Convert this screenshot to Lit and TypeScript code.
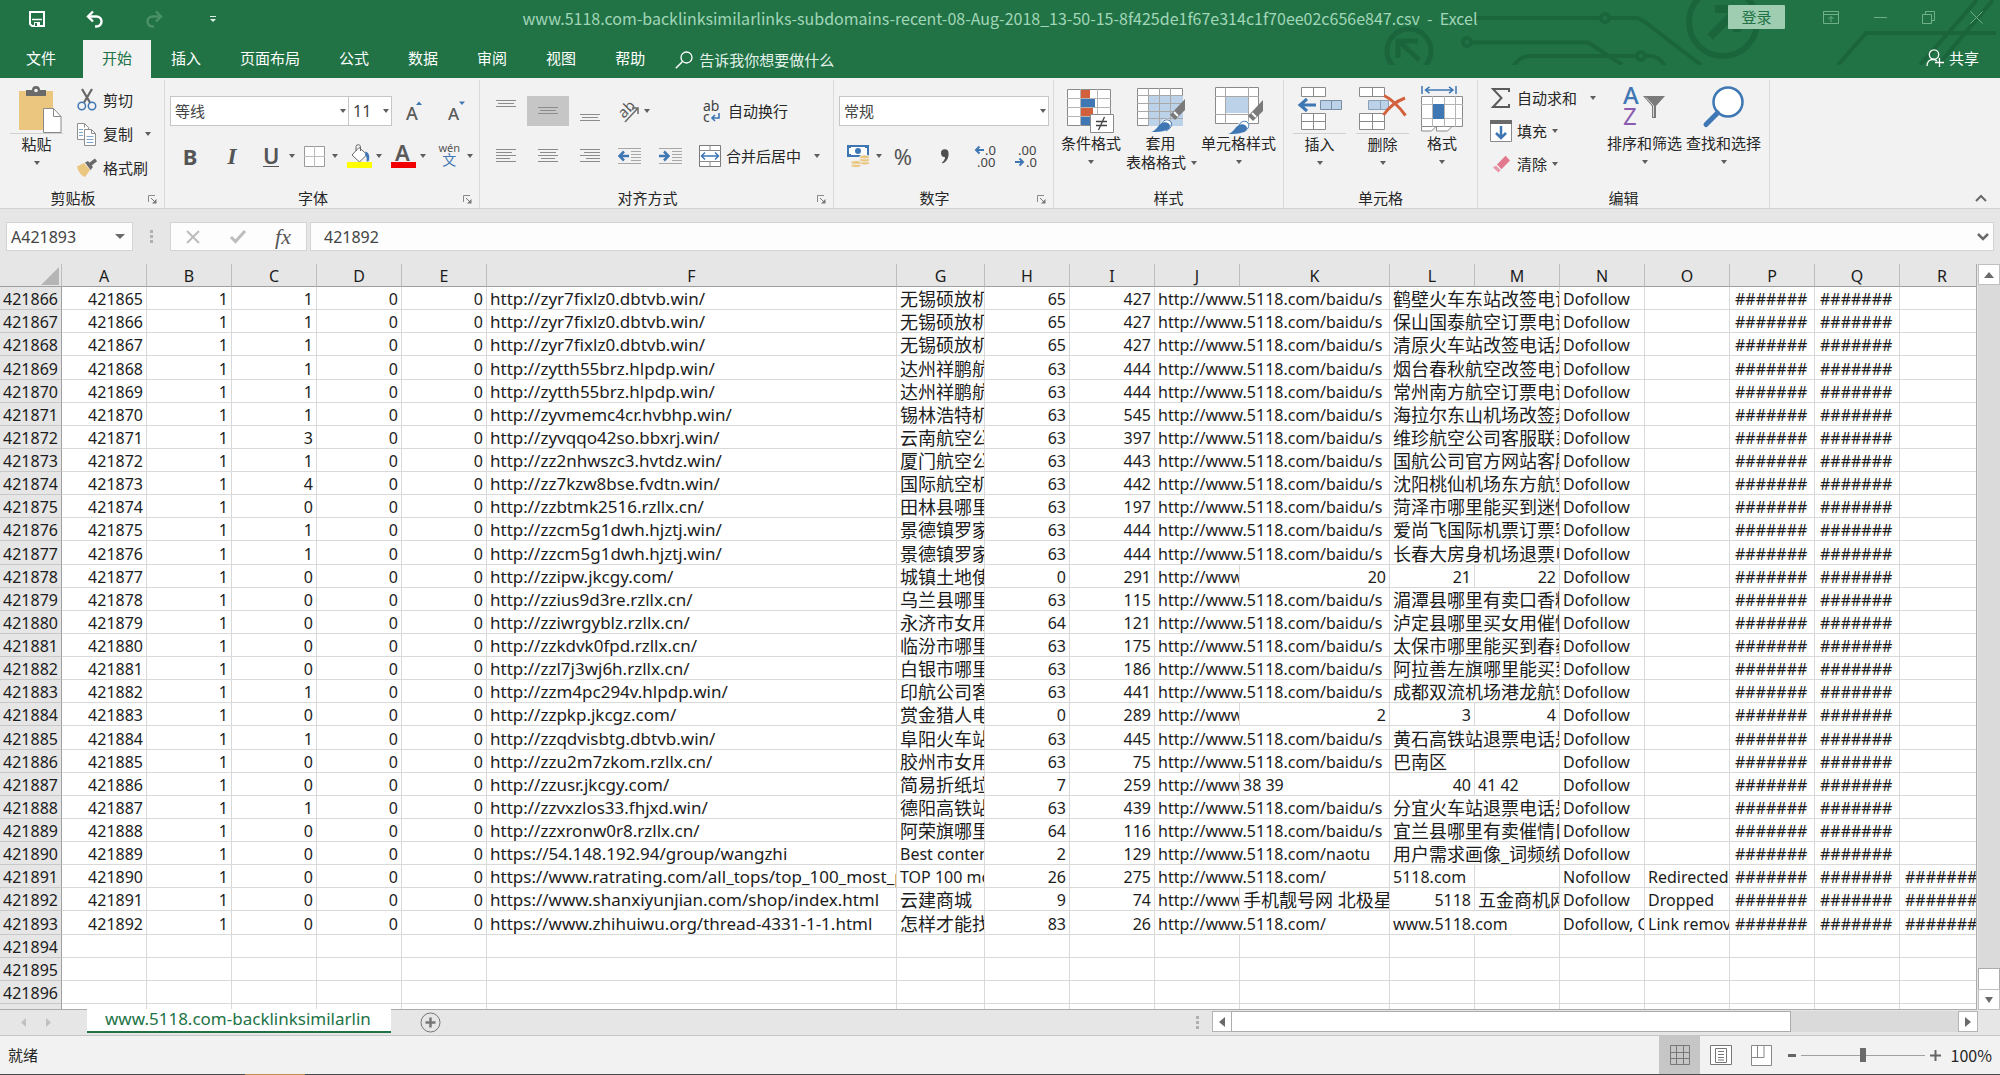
import { LitElement, html, css, svg, nothing, type TemplateResult } from "lit";
import { customElement } from "lit/decorators.js";
import { classMap } from "lit/directives/class-map.js";

type Cell = { text: string; kind?: "num" | "hash" | "cjk" | "url"; span?: number };

/* ---------- sheet data ---------- */

const COLUMNS = "ABCDEFGHIJKLMNOPQR".split("");
const FIRST_ROW = 421866;
const BAIDU = "http://www.5118.com/baidu/s";

/* [C, url, G, H, I, L] for ordinary rows */
type Row = [number, string, string, number, number, string | Cell[]];

const num = (text: string): Cell => ({ text, kind: "num" });
const cjk = (text: string, span = 1): Cell => ({ text, kind: "cjk", span });
const txt = (text: string, span = 1): Cell => ({ text, span });

const ROWS: Row[] = [
  [1, "http://zyr7fixlz0.dbtvb.win/", "无锡硕放机", 65, 427, "鹤壁火车东站改签电话"],
  [1, "http://zyr7fixlz0.dbtvb.win/", "无锡硕放机", 65, 427, "保山国泰航空订票电话"],
  [1, "http://zyr7fixlz0.dbtvb.win/", "无锡硕放机", 65, 427, "清原火车站改签电话是"],
  [1, "http://zytth55brz.hlpdp.win/", "达州祥鹏航", 63, 444, "烟台春秋航空改签电话"],
  [1, "http://zytth55brz.hlpdp.win/", "达州祥鹏航", 63, 444, "常州南方航空订票电话"],
  [1, "http://zyvmemc4cr.hvbhp.win/", "锡林浩特机", 63, 545, "海拉尔东山机场改签热"],
  [3, "http://zyvqqo42so.bbxrj.win/", "云南航空公", 63, 397, "维珍航空公司客服联系"],
  [1, "http://zz2nhwszc3.hvtdz.win/", "厦门航空公", 63, 443, "国航公司官方网站客服"],
  [4, "http://zz7kzw8bse.fvdtn.win/", "国际航空机", 63, 442, "沈阳桃仙机场东方航空"],
  [0, "http://zzbtmk2516.rzllx.cn/", "田林县哪里", 63, 197, "菏泽市哪里能买到迷情"],
  [1, "http://zzcm5g1dwh.hjztj.win/", "景德镇罗家", 63, 444, "爱尚飞国际机票订票客"],
  [1, "http://zzcm5g1dwh.hjztj.win/", "景德镇罗家", 63, 444, "长春大房身机场退票电"],
  [0, "http://zzipw.jkcgy.com/", "城镇土地使", 0, 291, [txt("http://www.5118.com/"), num("20"), num("21"), num("22")]],
  [0, "http://zzius9d3re.rzllx.cn/", "乌兰县哪里", 63, 115, "湄潭县哪里有卖口香糖"],
  [0, "http://zziwrgyblz.rzllx.cn/", "永济市女用", 64, 121, "泸定县哪里买女用催情"],
  [0, "http://zzkdvk0fpd.rzllx.cn/", "临汾市哪里", 63, 175, "太保市哪里能买到春药"],
  [0, "http://zzl7j3wj6h.rzllx.cn/", "白银市哪里", 63, 186, "阿拉善左旗哪里能买到"],
  [1, "http://zzm4pc294v.hlpdp.win/", "印航公司客", 63, 441, "成都双流机场港龙航空"],
  [0, "http://zzpkp.jkcgz.com/", "赏金猎人电", 0, 289, [txt("http://www.5118.com/"), num("2"), num("3"), num("4")]],
  [1, "http://zzqdvisbtg.dbtvb.win/", "阜阳火车站", 63, 445, "黄石高铁站退票电话是"],
  [0, "http://zzu2m7zkom.rzllx.cn/", "胶州市女用", 63, 75, [txt(BAIDU, 2), cjk("巴南区"), txt("")]],
  [0, "http://zzusr.jkcgy.com/", "简易折纸垃", 7, 259, [txt("http://www.5118.com/"), txt("38 39"), num("40"), txt("41 42")]],
  [1, "http://zzvxzlos33.fhjxd.win/", "德阳高铁站", 63, 439, "分宜火车站退票电话是"],
  [0, "http://zzxronw0r8.rzllx.cn/", "阿荣旗哪里", 64, 116, "宜兰县哪里有卖催情口"],
  [0, "https://54.148.192.94/group/wangzhi", "Best content", 2, 129, [txt("http://www.5118.com/naotu", 2), cjk("用户需求画像_词频统", 2)]],
  [0, "https://www.ratrating.com/all_tops/top_100_most_popular", "TOP 100 most", 26, 275, [txt("http://www.5118.com/", 2), txt("5118.com"), txt("")]],
  [0, "https://www.shanxiyunjian.com/shop/index.html", "云建商城", 9, 74, [txt("http://www.5118.com/"), cjk("手机靓号网 北极星"), num("5118"), cjk("五金商机网")]],
  [0, "https://www.zhihuiwu.org/thread-4331-1-1.html", "怎样才能找", 83, 26, [txt("http://www.5118.com/", 2), txt("www.5118.com", 2)]],
];

const TAILS: Record<number, [string, string]> = {
  25: ["Nofollow", "Redirected"],
  26: ["Dofollow", "Dropped"],
  27: ["Dofollow, Comment", "Link removed"],
};

function cellsOf(row: Row, index: number): Cell[] {
  const [c, url, g, h, i, rest] = row;
  const middle = typeof rest === "string" ? [txt(BAIDU, 2), cjk(rest, 2)] : rest;
  const [n, o] = TAILS[index] ?? ["Dofollow", ""];
  const hash: Cell = { text: "#######", kind: "hash" };
  return [
    num(String(FIRST_ROW + index - 1)), num("1"), num(String(c)), num("0"), num("0"),
    { text: url, kind: "url" },
    /^[A-Z]/.test(g) ? txt(g) : cjk(g),
    num(String(h)), num(String(i)),
    ...middle,
    txt(n), txt(o), hash, hash,
    TAILS[index] ? hash : txt(""),
  ];
}

/* ---------- icons ---------- */

const icon = (w: number, h: number, body: unknown) =>
  html`<svg width=${w} height=${h} viewBox="0 0 ${w} ${h}" fill="none" aria-hidden="true">${body}</svg>`;

const caret = html`<svg class="caret" width="6" height="4" viewBox="0 0 6 4" aria-hidden="true"><path d="M0 0h6L3 4z" fill="#5e5e5e"/></svg>`;

const UI = "'Noto Sans','Noto Sans CJK SC',sans-serif";
const GREY = "#6a6a6a";
const BLUE = "#3f77b4";

const I = {
  save: icon(16, 16, svg`<path d="M1 1h14v14H3l-2-2z" stroke="#fff" stroke-width="2"/><path d="M3 8.500h10" stroke="#fff" stroke-width="1.500"/><path d="M5 11h6v4H5z" fill="#fff"/><path d="M6 12h2v3H6z" fill="#217346"/>`),
  undo: icon(18, 17, svg`<path d="M3 5.500h7.500a5 5 0 0 1 0 10H9" stroke="#fff" stroke-width="2.400"/><path d="M7 .500L2 5.500l5 5" stroke="#fff" stroke-width="2.400"/>`),
  redo: icon(18, 17, svg`<path d="M15 5.500H7.500a5 5 0 0 0 0 10H9" stroke="#4a9069" stroke-width="2.400"/><path d="M11 .500l5 5-5 5" stroke="#4a9069" stroke-width="2.400"/>`),
  qat: icon(6, 7, svg`<path d="M0 .500h6" stroke="#dff0e6"/><path d="M0 3h6L3 6z" fill="#dff0e6"/>`),
  ribbonOpt: icon(16, 13, svg`<path d="M.500.500h15v12H.500zM.500 3.500h15M8 11V6M5.500 8L8 5.500 10.500 8" stroke="#6fb08a"/>`),
  min: icon(13, 13, svg`<path d="M0 6.500h13" stroke="#6fb08a"/>`),
  restore: icon(13, 13, svg`<path d="M.500 3.500h9v9h-9zM3.500 3.500v-3h9v9h-3" stroke="#6fb08a"/>`),
  close: icon(13, 13, svg`<path d="M.500.500l12 12M12.500.500l-12 12" stroke="#6fb08a"/>`),
  tell: icon(18, 18, svg`<circle cx="11.500" cy="6.500" r="5.500" stroke="#fff" stroke-width="1.300"/><path d="M7.500 10.500L.800 17.200" stroke="#fff" stroke-width="1.500"/>`),
  share: icon(18, 19, svg`<circle cx="8" cy="5.500" r="4.700" stroke="#fff" stroke-width="1.300"/><path d="M1 17c0-4 2.500-6.500 6-6.500 2 0 3 .500 4 1.500M13.500 9v9M9 13.500h9" stroke="#fff" stroke-width="1.300"/>`),
  launcher: icon(9, 9, svg`<path d="M.500 7V.500H7" stroke="#8a8a8a"/><path d="M3 3l4 4" stroke="#777"/><path d="M8.500 4v4.500H4z" fill="#777"/>`),
  paste: icon(44, 47, svg`<path d="M0 5h34v39H0z" fill="#ebc67f"/><path d="M7 10V4h6a4 4 0 0 1 8 0h6v6z" fill="${GREY}"/><circle cx="17" cy="4.500" r="1.800" fill="#f2f2f2"/><path d="M24.500 22.500h10l7.500 8v16H24.500z" fill="#fff" stroke="#8a8a8a"/><path d="M34.500 22.500v8H42" stroke="#8a8a8a"/>`),
  cut: icon(20, 22, svg`<path d="M5 0l8 13.500M15 0L7 13.500" stroke="#666" stroke-width="2.200"/><circle cx="4.800" cy="17" r="3.700" stroke="${BLUE}" stroke-width="1.500"/><circle cx="15" cy="17" r="3.700" stroke="${BLUE}" stroke-width="1.500"/>`),
  copy: icon(20, 23, svg`<path d="M.500.500h7l4 4v12h-11z" fill="#fff" stroke="#8e8e8e"/><path d="M7.500 6.500h7l4 4v12h-11z" fill="#fff" stroke="#8e8e8e"/><path d="M14.500 6.500v4h4M7.500.500v4" stroke="#8e8e8e"/><path d="M2 6.500h4M2 9.500h4M2 12.500h4M9.500 13.500h7M9.500 16.500h7M9.500 19.500h7" stroke="#7fa6cd"/>`),
  brush: icon(21, 18, svg`<path d="M0 7.500L7 4l6 7-5 7c-3-1-7-5-8-10.500z" fill="#ebc67f"/><path d="M8 3.500l3-1.500 5 6-2.500 3z" fill="${GREY}"/><path d="M13 5.500L19 .800" stroke="${GREY}" stroke-width="3.500"/>`),
  growA: icon(18, 20, svg`<text x="0" y="19" font-family=${UI} font-size="18" font-weight="500" fill="#5a5a5a">A</text><path d="M10 4l3-3.500L16 4z" fill="${BLUE}"/>`),
  shrinkA: icon(18, 20, svg`<text x="0" y="19" font-family=${UI} font-size="17" font-weight="500" fill="#5a5a5a">A</text><path d="M11 .500h6l-3 3.500z" fill="${BLUE}"/>`),
  borders: icon(21, 21, svg`<path d="M.500.500h20v20H.500z" fill="#fff" stroke="#9a9a9a"/><path d="M10.500 0v21M0 10.500h21" stroke="#bcbcbc"/>`),
  fill: icon(25, 24, svg`<path d="M5 11l7-7.500 8 7-7.500 7.500z" fill="#fff" stroke="#6a6a6a"/><path d="M9 7V2.500a2.300 2.300 0 0 1 4.500 0V7" stroke="#6a6a6a"/><path d="M18.500 7.500c3 1 4.500 4 3.500 8.500-.500 2-2.500 2-2.500 0 .500-2 0-4-1.500-5z" fill="${BLUE}"/><path d="M0 18h25v6H0z" fill="#ffff00"/>`),
  fontColor: icon(25, 24, svg`<text x="4" y="17" font-family=${UI} font-size="22" font-weight="600" fill="#5a5a5a">A</text><path d="M0 18h25v6H0z" fill="#f00000"/>`),
  orient: icon(24, 23, svg`<text x="3" y="18" transform="rotate(-45 6 14)" font-family=${UI} font-size="15" fill="#5a5a5a">ab</text><path d="M8 22L21 8M15 8h6v6" stroke="#6a6a6a" stroke-width="1.500"/>`),
  wrap: icon(17, 23, svg`<text x="0" y="11" font-family=${UI} font-size="14" fill="#444">ab</text><text x="0" y="22" font-family=${UI} font-size="14" fill="#444">c</text><path d="M16 13v5H9M12 15l-3 3 3 3" stroke="${BLUE}" stroke-width="1.600"/>`),
  outdent: icon(23, 18, svg`<path d="M0 1.500h23M0 16.500h23M13 4.500h10M13 7.500h10M13 10.500h10M13 13.500h10" stroke="#a8a8a8"/><path d="M11 9H2M6 4.500L1.500 9 6 13.500" stroke="${BLUE}" stroke-width="2.500"/>`),
  indent: icon(23, 18, svg`<path d="M0 1.500h23M0 16.500h23M13 4.500h10M13 7.500h10M13 10.500h10M13 13.500h10" stroke="#a8a8a8"/><path d="M0 9h9M5 4.500L9.500 9 5 13.500" stroke="${BLUE}" stroke-width="2.500"/>`),
  merge: icon(22, 22, svg`<path d="M.500.500h21v21H.500z" fill="#fff" stroke="#7a7a7a"/><path d="M0 5.500h22M0 16.500h22M11 0v5M11 17v5" stroke="#8a8a8a"/><path d="M3 11h16M6 7.500L2.500 11 6 14.500M16 7.500l3.500 3.500-3.500 3.500" stroke="${BLUE}" stroke-width="1.500"/>`),
  money: icon(23, 23, svg`<path d="M1 1h20v10H1z" fill="#fff" stroke="${BLUE}" stroke-width="2"/><circle cx="11" cy="6" r="3" fill="${BLUE}"/><path d="M1 1h3v2H1zM18 1h3v2h-3zM1 9h3v2H1z" fill="${BLUE}"/><g fill="#ebc67f" stroke="#f2f2f2"><ellipse cx="17.500" cy="18" rx="5" ry="2"/><ellipse cx="17.500" cy="15" rx="5" ry="2"/><ellipse cx="17.500" cy="12" rx="5" ry="2"/><ellipse cx="9" cy="20.500" rx="5" ry="2"/><ellipse cx="9" cy="17.500" rx="5" ry="2"/></g>`),
  comma: icon(9, 15, svg`<path d="M1 4a3.700 3.700 0 0 1 7.500 0c.500 5-2 9-6 10.500L2 13.500c2-1.500 3-3.500 3-5.500-2.500.300-4-1.500-4-4z" fill="#4f4f4f"/>`),
  incDec: icon(23, 23, svg`<path d="M10 5H2M5.500 1.500L2 5l3.500 3.500" stroke="${BLUE}" stroke-width="2"/><text x="11" y="10" font-family=${UI} font-size="13" fill="#444">.0</text><text x="3" y="22" font-family=${UI} font-size="13" fill="#444">.00</text>`),
  decDec: icon(23, 23, svg`<text x="3" y="10" font-family=${UI} font-size="13" fill="#444">.00</text><text x="11" y="22" font-family=${UI} font-size="13" fill="#444">.0</text><path d="M0 17h8M4.500 13.500L8 17l-3.500 3.500" stroke="${BLUE}" stroke-width="2"/>`),
  cond: icon(48, 48, svg`<path d="M.500 3.500h43v36H.500z" fill="#fff" stroke="#8a8a8a"/><path d="M13.500 3v37M30.500 3v37M0 12.500h44M0 21.500h44M0 30.500h44" stroke="#b4b4b4"/><path d="M14 4h9v8h-9zM14 22h12v8H14z" fill="#d2603c"/><path d="M14 13h14v8H14zM14 31h9v8h-9z" fill="${BLUE}"/><path d="M23.500 28.500h23v18h-23z" fill="#fff" stroke="#8a8a8a"/><path d="M29 35.500h11M29 39.500h11M37.500 31l-6 13" stroke="#444" stroke-width="1.300"/>`),
  tableFmt: icon(48, 46, svg`<path d="M.500 2.500h45v37H.500z" fill="#fff" stroke="#8a8a8a"/><path d="M12 10h34v30H12z" fill="#bcd2e8"/><path d="M11.500 2v38M22.500 2v38M33.500 2v38M0 9.500h46M0 17.500h46M0 25.500h46M0 32.500h46" stroke="#a8a8a8"/><path d="M48 13v11L38 34l-5-5z" fill="#7a7a7a"/><path d="M37 26l4 4" stroke="#fff" stroke-width="2"/><path d="M24 36c3-4 7-4 9-2 2 3 1 7-4 9z" fill="#fff"/><path d="M14 46c5-1 7-7 11-9 3-2 8 0 8 3 0 4-6 6-19 6z" fill="${BLUE}"/><path d="M25 37c2-4 7-4 9-1s-1 7-5 9" stroke="${BLUE}"/>`),
  cellStyle: icon(48, 48, svg`<path d="M.500 1.500h43v36H.500z" fill="#fff" stroke="#8a8a8a"/><path d="M10.500 1v37M33.500 1v37M0 10.500h44M0 28.500h44" stroke="#a8a8a8"/><path d="M11 11h22v16H11z" fill="#bcd2e8"/><path d="M48 14v11L38 35l-5-5z" fill="#7a7a7a"/><path d="M37 27l4 4" stroke="#fff" stroke-width="2"/><path d="M23 37c3-4 8-4 10-2 2 3 1 7-4 9z" fill="#fff"/><path d="M13 48c5-1 7-7 11-9 3-2 8 0 8 3 0 4-6 6-19 6z" fill="${BLUE}"/><path d="M24 39c2-4 7-5 9-2s0 7-5 9" stroke="${BLUE}"/>`),
  insert: icon(46, 46, svg`<path d="M4.500 1.500h24v9h-24zM16.500 1.500v9M4.500 27.500h24v16h-24zM4.500 35.500h24M16.500 27.500v16" fill="#fff" stroke="#8a8a8a"/><path d="M23.500 14.500h21v9h-21z" fill="#bcd2e8" stroke="#7a8ea3"/><path d="M34.500 14v10" stroke="#7a8ea3"/><path d="M19 19H4M10 13l-7 6 7 6" stroke="${BLUE}" stroke-width="3"/>`),
  del: icon(48, 46, svg`<path d="M.500 1.500h25v9h-25zM13.500 1.500v9M.500 27.500h25v16h-25zM.500 35.500h25M13.500 27.500v16" fill="#fff" stroke="#8a8a8a"/><path d="M9.500 14.500h20v9h-20z" fill="#bcd2e8" stroke="#8aa0b5"/><path d="M21.500 14v10" stroke="#8aa0b5"/><path d="M25 9.500c8 4 15 11 21.500 20M46 12c-8 3-16 9-21.500 17" stroke="#d2603c" stroke-width="3"/>`),
  format: icon(43, 46, svg`<path d="M.500 10.500h41v30H.500z" fill="#fff" stroke="#8a8a8a"/><path d="M11.500 10v31M23.500 10v31M34.500 10v31M0 18.500h42M0 32.500h42" stroke="#b4b4b4"/><path d="M12 18h11v15H12z" fill="${BLUE}"/><path d="M.500 41v4h10l4-4M15.500 41v4h11l4-4" fill="#fff" stroke="#8a8a8a"/><path d="M1 0v8M35 0v8M5 4h27M8.500.800L4.500 4l4 3.200M28 .800L32 4l-4 3.200" stroke="${BLUE}" stroke-width="1.500"/>`),
  sum: icon(20, 20, svg`<path d="M18 4V1H2l8.500 9L2 19h16v-3" stroke="#5a5a5a" stroke-width="2"/>`),
  fillDown: icon(22, 22, svg`<path d="M.500.500h21v21H.500z" fill="#fff" stroke="#8a8a8a"/><path d="M0 0h22v4H0z" fill="${GREY}"/><path d="M11 6v12M6 13l5 5 5-5" stroke="${BLUE}" stroke-width="2.500"/>`),
  eraser: icon(20, 18, svg`<path d="M6 9.500L14.500.800 19 5.500l-8.500 8.700z" fill="#e2788d"/><path d="M5 10.500l4.600 4.700-2.100 2.200L2 12.500z" fill="#e99aaa"/>`),
  sort: icon(43, 42, svg`<text x="0" y="18" font-family=${UI} font-size="24" font-weight="500" fill="${BLUE}">A</text><text x="0" y="39" font-family=${UI} font-size="24" fill="#8a5bb0">Z</text><path d="M20 10h22l-9 10v12h-4V20z" fill="#7a7a7a"/><path d="M23 11.500l7.500 8V31" stroke="#d8d8d8"/>`),
  find: icon(43, 43, svg`<circle cx="26" cy="16" r="14.500" fill="#fff" stroke="${BLUE}" stroke-width="2.500"/><path d="M15.500 27L4 38.500" stroke="${BLUE}" stroke-width="5" stroke-linecap="round"/>`),
  collapse: icon(12, 8, svg`<path d="M1 7l5-5 5 5" stroke="#6a6a6a" stroke-width="2"/>`),
  expand: icon(12, 8, svg`<path d="M1 1l5 5 5-5" stroke="#6a6a6a" stroke-width="2.500"/>`),
  nameCaret: icon(10, 5, svg`<path d="M0 0h10L5 5z" fill="#6a6a6a"/>`),
  dots: icon(3, 13, svg`<path d="M0 0h3v3H0zM0 5h3v3H0zM0 10h3v3H0z" fill="#b0b0b0"/>`),
  cancel: icon(14, 14, svg`<path d="M1 1l12 12M13 1L1 13" stroke="#bdbdbd" stroke-width="2"/>`),
  enter: icon(16, 13, svg`<path d="M1 7l4.500 4.500L15 1" stroke="#bdbdbd" stroke-width="3"/>`),
  corner: icon(18, 18, svg`<path d="M18 0v18H0z" fill="#b5b5b5"/>`),
  left: icon(6, 10, svg`<path d="M6 0v10L0 5z" fill="#6a6a6a"/>`),
  right: icon(6, 10, svg`<path d="M0 0v10l6-5z" fill="#6a6a6a"/>`),
  navLeft: icon(5, 9, svg`<path d="M5 0v9L0 4.500z" fill="#c0c0c0"/>`),
  navRight: icon(5, 9, svg`<path d="M0 0v9l5-4.500z" fill="#c0c0c0"/>`),
  up: icon(10, 6, svg`<path d="M0 6h10L5 0z" fill="#6a6a6a"/>`),
  down: icon(8, 6, svg`<path d="M0 0h8L4 6z" fill="#6a6a6a"/>`),
  add: icon(21, 21, svg`<circle cx="10.500" cy="10.500" r="9.500" stroke="#777"/><path d="M10.500 5.500v10M5.500 10.500h10" stroke="#777" stroke-width="2.500"/>`),
  vNormal: icon(20, 20, svg`<path d="M.500.500h19v19H.500zM6.500 0v20M13.500 0v20M0 7.500h20M0 13.500h20" stroke="#777"/>`),
  vPage: icon(22, 20, svg`<path d="M.500.500h21v19H.500z" fill="#fff" stroke="#777"/><path d="M5.500 3.500h11v14h-11z" stroke="#777"/><path d="M8 6.500h6M8 9.500h6M8 12.500h6M8 15h6" stroke="#777"/>`),
  vBreak: icon(22, 21, svg`<path d="M.500.500h20v20H.500z" fill="#fff" stroke="#888"/><path d="M6.500 0v12.500M.500 12.500h12.500V.500" stroke="#888"/>`),
  minus: icon(9, 3, svg`<path d="M0 0h8v3H0z" fill="#666"/>`),
  plus: icon(11, 11, svg`<path d="M5.500 0v11M0 5.500h11" stroke="#666" stroke-width="2"/>`),
};

const lines = (align: "left" | "center" | "right", n = 5) => {
  const w = [20, 16, 20, 14, 20];
  const h = n * 3;
  return icon(20, h, w.slice(0, n).map((len, k) => {
    const lw = n === 3 ? (k === 1 ? 16 : 20) : len;
    const x = align === "left" ? 0 : align === "right" ? 20 - lw : (20 - lw) / 2;
    return svg`<path d="M${x} ${k * 3 + 0.5}h${lw}" stroke="#8c8c8c"/>`;
  }));
};

const circuit = html`<svg class="circuit" width="615" height="65" viewBox="0 0 615 65" fill="none" stroke="#1b653c" stroke-width="4" aria-hidden="true">
  <circle cx="82" cy="42" r="4"/>
  <path d="M86 42.500h117l34 22"/>
  <path d="M78 18h138M224 18h26c6 0 10 4 14 7l52 40"/>
  <circle cx="220" cy="18" r="4"/>
  <path d="M128 66c6-6 8-10 18-10h106M260 56h6c6 0 10 4 14 10"/>
  <circle cx="256" cy="56" r="4"/>
  <circle cx="338" cy="22" r="34" stroke-width="6"/>
  <path d="M325 37l26-26M330 9h22v23" stroke-width="8"/>
  <path d="M453 65l28-32h130M535 65L592 0M553 65L608 0"/>
</svg>`;

const arrowBadge = html`<svg class="badge" width="50" height="39" viewBox="0 0 50 39" fill="none" stroke="#1b653c" aria-hidden="true">
  <circle cx="25" cy="25" r="22" stroke-width="5"/>
  <path d="M35 34L16 16M14 32V15h20" stroke-width="5"/>
</svg>`;

/* ---------- component ---------- */

@customElement("app-root")
export class AppRoot extends LitElement {
  static styles = css`
    :host {
      display: flex;
      flex-direction: column;
      height: 100vh;
      overflow: hidden;
      background: #e6e6e6;
      color: #262626;
      font: 15px/20px "Noto Sans", "Noto Sans CJK SC", sans-serif;
    }
    * { box-sizing: border-box; }
    svg { display: block; flex: none; overflow: visible; }
    button, select, input { font: inherit; color: inherit; margin: 0; }
    button {
      display: flex; align-items: center; justify-content: center;
      padding: 0; border: 0; background: none; white-space: nowrap;
    }

    /* title bar and tabs */
    .top { position: relative; flex: none; background: #217346; color: #fff; overflow: hidden; }
    .circuit { position: absolute; right: 0; top: 0; overflow: hidden; }
    .badge { position: absolute; right: 566px; top: 26px; overflow: hidden; }
    .title { position: relative; display: grid; grid-template-columns: 1fr auto 1fr; height: 40px; }
    .qat { display: flex; align-items: center; gap: 41px; padding: 0 0 2px 29px; }
    .qat button:last-child { margin-left: 6px; }
    .doc { color: #a2d6b8; font-family: "Noto Sans CJK SC", sans-serif; font-size: 16px; line-height: 36px; white-space: pre; }
    .win { display: flex; justify-content: flex-end; align-items: flex-start; gap: 35px; padding: 5px 17px 0 0; }
    .win button { height: 24px; }
    .win .login { width: 57px; margin-right: 3px; background: #9fcdb2; color: #217346; border-radius: 1px; }
    .tabs { position: relative; display: flex; height: 38px; }
    .tabs button { padding: 0 20px 2px 19px; }
    .tabs .file { padding: 0 27px 2px 26px; }
    .tabs .on { margin-right: 1px; padding: 0 19px 2px 19px; background: #f2f2f2; color: #217346; }
    .tabs .tell { gap: 6px; padding: 2px 0 0 10px; color: #e3f2e9; }
    .tabs .share { margin-left: auto; gap: 5px; padding: 0 21px 2px 0; }

    /* ribbon */
    .ribbon { display: flex; flex: none; height: 131px; background: #f2f2f2; border-bottom: 1px solid #d2d2d2; }
    .group { display: flex; flex-direction: column; border-right: 1px solid #dadada; margin-top: 2px; }
    .body { display: flex; align-items: flex-start; flex: 1; min-height: 0; }
    .foot { display: flex; flex: none; height: 20px; align-items: center; }
    .foot span { flex: 1; text-align: center; }
    .foot button { width: 18px; justify-content: flex-start; padding: 2px 0 0 2px; }
    .end { flex: 1; display: flex; justify-content: flex-end; align-items: flex-end; padding: 0 13px 6px 0; }
    .big { flex-direction: column; justify-content: flex-start; line-height: 19px; }
    .big .pic { display: flex; align-items: flex-start; justify-content: center; height: 48px; }
    .big .caret { margin-top: 7px; }
    .big .pair { display: flex; align-items: center; gap: 5px; padding-left: 2px; }
    .big .pair .caret { margin: 0; }
    .split .pic { border-bottom: 1px solid #d0d0d0; width: 53px; margin-bottom: 1px; }
    .rows { display: flex; flex-direction: column; }
    .line { display: flex; align-items: center; height: 30px; }
    .small { gap: 6px; height: 34px; justify-content: flex-start; }
    .small .caret { margin-left: 6px; }
    .drop { gap: 7px; }
    .drop.tight { gap: 4px; }
    .pick { position: relative; display: flex; }
    .pick select {
      width: 100%; height: 30px; padding: 0 4px; appearance: none;
      border: 1px solid #c6c6c6; border-radius: 0; background: #fff; color: #444;
    }
    .pick .caret { position: absolute; right: 3px; top: 13px; pointer-events: none; }

    .g-clip { width: 165px; }
    .g-clip .body { padding: 3px 0 0 10px; }
    .g-clip .rows { padding-left: 14px; }
    .g-clip .big { margin-top: 3px; }
    .g-clip .big .pic { padding-left: 8px; }
    .g-clip .rows .pic { width: 20px; }
    .g-font { width: 315px; }
    .g-font .body, .g-align .body, .g-num .body { flex-direction: column; padding: 16px 0 0 5px; gap: 15px; }
    .family { width: 179px; }
    .size { width: 44px; margin-left: -1px; }
    .size select { padding: 0 4px; font-size: 16px; }
    .grow { margin-left: 14px; }
    .shrink { margin-left: 24px; }
    .b, .i, .u { font-size: 22px; line-height: 26px; color: #555; font-weight: 700; }
    .b { margin-left: 12px; width: 16px; }
    .i { margin-left: 27px; width: 14px; font-family: "Liberation Serif", serif; font-style: italic; font-size: 24px; }
    .u { margin-left: 24px; }
    .u span { border-bottom: 1px solid #555; font-weight: 600; line-height: 20px; padding-bottom: 1px; }
    .drop.u { gap: 10px; }
    .ml { margin-left: 9px; }
    .phonetic { margin-left: 12px; }
    .wen { display: flex; flex-direction: column; align-items: center; font-size: 11px; line-height: 8px; color: #555; }
    .wen b { font-size: 14px; line-height: 16px; font-weight: 400; color: #3f77b4; }

    .g-align { width: 354px; }
    .al { width: 42px; height: 30px; }
    .al.on { background: #c6c6c6; }
    .al.t { align-items: flex-start; padding-top: 4px; }
    .al.bt { align-items: flex-end; padding-bottom: 3px; }
    .g-align .orient { margin-left: 6px; gap: 3px; }
    .g-align .wraptext { margin-left: 53px; gap: 8px; }
    .g-align .out { margin-left: 7px; }
    .g-align .in { margin-left: 18px; }
    .g-align .merge { margin-left: 17px; gap: 5px; }
    .g-align .merge .caret { margin-left: 8px; }

    .g-num { width: 220px; }
    .general { width: 210px; }
    .g-num .money { margin-left: 8px; gap: 6px; }
    .pct { margin-left: 12px; width: 18px; font-size: 22px; color: #555; }
    .com { margin-left: 28px; }
    .inc { margin-left: 25px; }
    .dec { margin-left: 18px; }

    .g-style { width: 230px; }
    .g-style .body { padding: 6px 0 0 7px; }
    .g-style .big:nth-child(1) { width: 60px; }
    .g-style .big:nth-child(2) { width: 79px; }
    .g-style .big:nth-child(3) { width: 77px; }
    .g-cell { width: 194px; }
    .g-cell .body { padding: 6px 0 0 9px; gap: 10px; }
    .g-cell .big:last-child { width: 46px; }
    .g-edit { width: 292px; }
    .g-edit .body { padding: 1px 0 0 12px; }
    .g-edit .rows { width: 116px; }
    .g-edit .rows .pic { width: 22px; display: flex; justify-content: center; }
    .g-edit .small { gap: 5px; height: 33px; }
    .g-edit .small .caret { margin-left: 8px; }
    .g-edit .small.near .caret { margin-left: 0; }
    .g-edit .big { width: 77px; margin-top: 5px; }
    .g-edit .find { margin-left: 2px; }

    /* formula bar */
    .formula { display: flex; flex: none; align-items: center; height: 55px; padding: 0 6px; font-size: 16px; }
    .box { display: flex; align-items: center; height: 29px; background: #fdfdfd; border: 1px solid #d4d4d4; }
    .name { width: 127px; padding-right: 7px; }
    .name input { flex: 1; min-width: 0; padding-left: 4px; }
    .box input { border: 0; background: none; outline: 0; height: 27px; color: #444; }
    .formula > .dots { margin: 0 17px; }
    .acts { width: 137px; justify-content: space-between; padding: 0 15px 0 15px; }
    .fx { font: italic 22px/24px "Liberation Serif", serif; color: #555; }
    .value { flex: 1; margin-left: 3px; padding-right: 4px; }
    .value input { flex: 1; min-width: 0; padding-left: 13px; }

    /* sheet */
    .sheet { flex: 1; min-height: 0; display: flex; }
    .grid { flex: 1; min-width: 0; overflow: hidden; border-right: 1px solid #ababab; border-bottom: 1px solid #ababab; background: #fff; }
    table { width: 100%; min-width: 1985px; table-layout: fixed; border-collapse: separate; border-spacing: 0; font-size: 16px; line-height: 20px; color: #1c1c1c; }
    .c-head { width: 62px; }
    .c-85 { width: 85px; }
    .c-url { width: 410px; }
    .c-g { width: 88px; }
    .c-k { width: 150px; }
    th { padding: 2px 0 0; font-weight: 400; background: #e6e6e6; }
    thead th { height: 23px; border-right: 1px solid #bdbdbd; border-bottom: 1px solid #9f9f9f; }
    thead th:first-child svg { margin: 0 2px 0 auto; }
    tbody th { border-right: 1px solid #9f9f9f; border-bottom: 1px solid #c8c8c8; }
    td { padding: 2px 3px 0; overflow: hidden; white-space: nowrap; border-right: 1px solid #d9d9d9; border-bottom: 1px solid #d9d9d9; }
    tbody tr { height: 23px; }
    tbody tr:nth-child(8n + 4) { height: 24px; }
    .num { text-align: right; }
    .url { font-size: 17px; }
    .hash { padding-left: 5px; }
    .cjk { font-size: 18px; }
    .vbar { width: 22px; display: flex; flex-direction: column; margin-left: 1px; }
    .vbar button { height: 21px; background: #fff; border: 1px solid #c0c0c0; }
    .vtrack { flex: 1; display: flex; flex-direction: column; justify-content: flex-end; background: #dadada; }
    .vthumb { height: 21px; background: #fff; border: 1px solid #ababab; border-bottom: 0; }

    /* sheet tabs */
    .bottom { display: flex; flex: none; height: 26px; border-bottom: 1px solid #c6c6c6; }
    .nav { display: flex; align-items: center; gap: 20px; width: 87px; padding-left: 21px; }
    .tab { height: 24px; margin-top: -1px; padding: 0 20px 2px 18px; background: #fff; border-bottom: 2px solid #217346; color: #217346; font-size: 17px; }
    .add { margin: 0 0 0 29px; }
    .hdots { margin-left: auto; padding: 6px 13px 0 0; }
    .hbar { display: flex; width: 766px; max-width: 50%; height: 21px; margin: 1px 22px 0 0; background: #dadada; }
    .hbar button { width: 20px; background: #fff; border: 1px solid #b4b4b4; }
    .hthumb { flex: 0 1 560px; margin-left: -1px; background: #fff; border: 1px solid #ababab; }
    .hbar button:last-child { margin-left: auto; }

    /* status bar */
    .status { display: flex; flex: none; align-items: center; height: 38px; padding: 0 8px; background: #f2f2f2; }
    .status .ready { flex: 1; }
    .view { width: 41px; height: 38px; }
    .view.on { background: #c6c6c6; }
    .zoom { width: 10px; margin: 0 4px 0 5px; }
    .status input { width: 124px; height: 16px; appearance: none; background: linear-gradient(#a0a0a0, #a0a0a0) center / 100% 1px no-repeat; }
    .status input::-webkit-slider-thumb { appearance: none; width: 6px; height: 14px; background: #6a6a6a; }
    .pctv { width: 48px; justify-content: flex-end; font-family: "Noto Sans CJK SC", sans-serif; font-size: 16px; }
    .task { flex: none; height: 1px; background: #4a4a4a; padding-left: 245px; }
    .task i { display: block; width: 60px; height: 1px; background: #c08a50; }
  `;

  private group(cls: string, label: string, body: TemplateResult, launcher = false) {
    return html`<section class="group ${cls}" aria-label=${label}>
      <div class="body">${body}</div>
      <div class="foot"><span>${label}</span>${launcher ? html`<button aria-label="${label}设置">${I.launcher}</button>` : nothing}</div>
    </section>`;
  }

  private big(pic: TemplateResult, label: string, cls = "") {
    return html`<button class="big ${cls}"><span class="pic">${pic}</span><span>${label}</span>${caret}</button>`;
  }

  private small(pic: TemplateResult, label: string, withCaret = true, cls = "") {
    return html`<button class="small ${cls}"><span class="pic">${pic}</span><span>${label}</span>${withCaret ? caret : nothing}</button>`;
  }

  private pick(cls: string, label: string, value: string) {
    return html`<div class="pick ${cls}"><select aria-label=${label}><option>${value}</option></select>${caret}</div>`;
  }

  private renderTop() {
    const tabs = ["插入", "页面布局", "公式", "数据", "审阅", "视图", "帮助"];
    return html`<header class="top">
      ${circuit}${arrowBadge}
      <div class="title">
        <div class="qat">
          <button aria-label="保存">${I.save}</button>
          <button aria-label="撤消">${I.undo}</button>
          <button aria-label="恢复">${I.redo}</button>
          <button aria-label="自定义快速访问工具栏">${I.qat}</button>
        </div>
        <div class="doc">www.5118.com-backlinksimilarlinks-subdomains-recent-08-Aug-2018_13-50-15-8f425de1f67e314c1f70ee02c656e847.csv  -  Excel</div>
        <div class="win">
          <button class="login">登录</button>
          <button aria-label="功能区显示选项">${I.ribbonOpt}</button>
          <button aria-label="最小化">${I.min}</button>
          <button aria-label="还原">${I.restore}</button>
          <button aria-label="关闭">${I.close}</button>
        </div>
      </div>
      <nav class="tabs">
        <button class="file">文件</button>
        <button class="on">开始</button>
        ${tabs.map((t) => html`<button>${t}</button>`)}
        <button class="tell">${I.tell}<span>告诉我你想要做什么</span></button>
        <button class="share">${I.share}<span>共享</span></button>
      </nav>
    </header>`;
  }

  private renderRibbon() {
    return html`<div class="ribbon">
      ${this.group("g-clip", "剪贴板", html`
        ${this.big(I.paste, "粘贴", "split")}
        <div class="rows">
          ${this.small(I.cut, "剪切", false)}
          ${this.small(I.copy, "复制")}
          ${this.small(I.brush, "格式刷", false)}
        </div>`, true)}
      ${this.group("g-font", "字体", html`
        <div class="line">
          ${this.pick("family", "字体", "等线")}
          ${this.pick("size", "字号", "11")}
          <button class="grow" aria-label="增大字号">${I.growA}</button>
          <button class="shrink" aria-label="减小字号">${I.shrinkA}</button>
        </div>
        <div class="line">
          <button class="b">B</button>
          <button class="i">I</button>
          <button class="u drop"><span>U</span>${caret}</button>
          <button class="drop ml" aria-label="边框">${I.borders}${caret}</button>
          <button class="drop tight ml" aria-label="填充颜色">${I.fill}${caret}</button>
          <button class="drop tight ml" aria-label="字体颜色">${I.fontColor}${caret}</button>
          <button class="drop phonetic"><span class="wen">wén<b>文</b></span>${caret}</button>
        </div>`, true)}
      ${this.group("g-align", "对齐方式", html`
        <div class="line">
          <button class="al t" aria-label="顶端对齐">${lines("center", 3)}</button>
          <button class="al on" aria-label="垂直居中">${lines("center", 3)}</button>
          <button class="al bt" aria-label="底端对齐">${lines("center", 3)}</button>
          <button class="orient" aria-label="方向">${I.orient}${caret}</button>
          <button class="wraptext">${I.wrap}<span>自动换行</span></button>
        </div>
        <div class="line">
          <button class="al" aria-label="左对齐">${lines("left")}</button>
          <button class="al" aria-label="居中">${lines("center")}</button>
          <button class="al" aria-label="右对齐">${lines("right")}</button>
          <button class="out" aria-label="减少缩进量">${I.outdent}</button>
          <button class="in" aria-label="增加缩进量">${I.indent}</button>
          <button class="merge">${I.merge}<span>合并后居中</span>${caret}</button>
        </div>`, true)}
      ${this.group("g-num", "数字", html`
        <div class="line">${this.pick("general", "数字格式", "常规")}</div>
        <div class="line">
          <button class="money" aria-label="会计数字格式">${I.money}${caret}</button>
          <button class="pct">%</button>
          <button class="com" aria-label="千位分隔样式">${I.comma}</button>
          <button class="inc" aria-label="增加小数位数">${I.incDec}</button>
          <button class="dec" aria-label="减少小数位数">${I.decDec}</button>
        </div>`, true)}
      ${this.group("g-style", "样式", html`
        ${this.big(I.cond, "条件格式")}
        <button class="big"><span class="pic">${I.tableFmt}</span><span>套用</span><span class="pair">表格格式${caret}</span></button>
        ${this.big(I.cellStyle, "单元格样式")}`)}
      ${this.group("g-cell", "单元格", html`
        ${this.big(I.insert, "插入", "split")}
        ${this.big(I.del, "删除", "split")}
        ${this.big(I.format, "格式")}`)}
      ${this.group("g-edit", "编辑", html`
        <div class="rows">
          ${this.small(I.sum, "自动求和")}
          ${this.small(I.fillDown, "填充", true, "near")}
          ${this.small(I.eraser, "清除", true, "near")}
        </div>
        ${this.big(I.sort, "排序和筛选", "sort")}
        ${this.big(I.find, "查找和选择", "find")}`)}
      <div class="end"><button aria-label="折叠功能区">${I.collapse}</button></div>
    </div>`;
  }

  private renderTable() {
    const widths = ["c-head", "c-85", "c-85", "c-85", "c-85", "c-85", "c-url", "c-g", "c-85", "c-85", "c-85", "c-k", "c-85", "c-85", "c-85", "c-85", "c-85", "c-85", "c-85"];
    const blank = (label: string) => html`<tr><th scope="row">${label}</th>${COLUMNS.map(() => html`<td></td>`)}</tr>`;
    return html`<table>
      <colgroup>${widths.map((w) => html`<col class=${w}>`)}</colgroup>
      <thead><tr><th aria-label="全选">${I.corner}</th>${COLUMNS.map((c) => html`<th scope="col">${c}</th>`)}</tr></thead>
      <tbody>
        ${ROWS.map((row, r) => html`<tr>
          <th scope="row">${FIRST_ROW + r}</th>
          ${cellsOf(row, r).map((c) => html`<td colspan=${c.span ?? 1} class=${classMap({ num: c.kind === "num", cjk: c.kind === "cjk", url: c.kind === "url", hash: c.kind === "hash" })}>${c.text}</td>`)}
        </tr>`)}
        ${["421894", "421895", "421896", ""].map(blank)}
      </tbody>
    </table>`;
  }

  render() {
    return html`
      ${this.renderTop()}
      ${this.renderRibbon()}
      <div class="formula">
        <div class="box name"><input aria-label="名称框" value="A421893">${I.nameCaret}</div>
        <span class="dots">${I.dots}</span>
        <div class="box acts">
          <button aria-label="取消">${I.cancel}</button>
          <button aria-label="输入">${I.enter}</button>
          <button class="fx" aria-label="插入函数">fx</button>
        </div>
        <div class="box value"><input aria-label="编辑栏" value="421892"><button aria-label="展开编辑栏">${I.expand}</button></div>
      </div>
      <div class="sheet">
        <div class="grid">${this.renderTable()}</div>
        <div class="vbar">
          <button aria-label="向上滚动">${I.up}</button>
          <div class="vtrack"><div class="vthumb"></div></div>
          <button aria-label="向下滚动">${I.down}</button>
        </div>
      </div>
      <div class="bottom">
        <div class="nav"><button aria-label="上一个">${I.navLeft}</button><button aria-label="下一个">${I.navRight}</button></div>
        <button class="tab">www.5118.com-backlinksimilarlin</button>
        <button class="add" aria-label="新工作表">${I.add}</button>
        <span class="hdots">${I.dots}</span>
        <div class="hbar">
          <button aria-label="向左滚动">${I.left}</button>
          <div class="hthumb"></div>
          <button aria-label="向右滚动">${I.right}</button>
        </div>
      </div>
      <footer class="status">
        <span class="ready">就绪</span>
        <button class="view on" aria-label="普通">${I.vNormal}</button>
        <button class="view" aria-label="页面布局">${I.vPage}</button>
        <button class="view" aria-label="分页预览">${I.vBreak}</button>
        <button class="zoom" aria-label="缩小">${I.minus}</button>
        <input type="range" min="0" max="100" value="50" aria-label="缩放">
        <button class="zoom" aria-label="放大">${I.plus}</button>
        <button class="pctv">100%</button>
      </footer>
      <div class="task"><i></i></div>
    `;
  }
}
